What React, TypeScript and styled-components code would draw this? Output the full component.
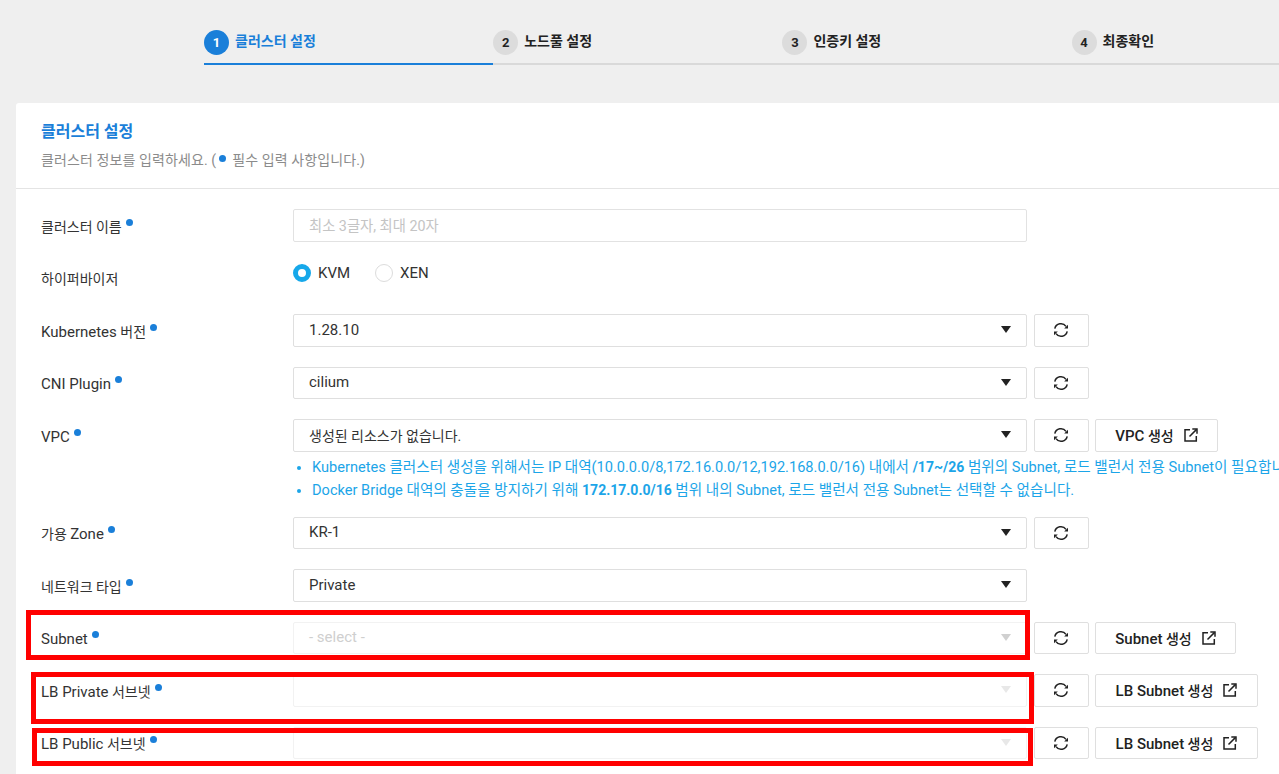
import { ReactNode } from 'react';
import styled, { createGlobalStyle } from 'styled-components';

const GlobalStyle = createGlobalStyle`
  html, body {
    margin: 0;
    padding: 0;
    background: #efefef;
    overflow: hidden;
  }
  * {
    box-sizing: border-box;
  }
  body {
    font-family: Roboto, "Noto Sans CJK KR", sans-serif;
    font-size: 14px;
    color: #222;
  }
`;

const Page = styled.div`
  position: relative;
  width: 1279px;
  height: 774px;
  overflow: hidden;
  background: #efefef;
`;

/* the latin part of a mixed label sits a little larger than the hangul */
const Latin = styled.span`
  font-size: 15px;
`;

const Stepper = styled.ol`
  display: flex;
  list-style: none;
  margin: 0;
  padding: 26px 0 0 204px;
  width: 1500px;
  height: 103px;
`;

const Step = styled.li<{ $active?: boolean }>`
  display: flex;
  align-items: flex-start;
  gap: 6px;
  width: 289.2px;
  height: 39px;
  padding-top: 4px;
  border-bottom: 2px solid ${(p) => (p.$active ? '#1a7fd9' : '#d9d9d9')};
  color: ${(p) => (p.$active ? '#1a7fd9' : '#222')};
  font-weight: 700;
  line-height: 23px;
`;

const StepNumber = styled.span<{ $active?: boolean }>`
  display: flex;
  align-items: center;
  justify-content: center;
  width: 25px;
  height: 25px;
  border-radius: 50%;
  background: ${(p) => (p.$active ? '#1a7fd9' : '#dcdcdc')};
  color: ${(p) => (p.$active ? '#fff' : '#222')};
  font-size: 13px;
  font-weight: 700;
`;

const Card = styled.section`
  margin-left: 16px;
  width: 1400px;
  height: 700px;
  background: #fff;
  border-radius: 3px 0 0 3px;
`;

const CardHeader = styled.header`
  height: 86px;
  padding: 17px 25px 0;
  border-bottom: 1px solid #e4e4e4;
`;

const CardTitle = styled.h2`
  margin: 0;
  font-size: 16px;
  line-height: 23px;
  font-weight: 700;
  color: #1a7fd9;
`;

const CardSub = styled.p`
  margin: 6px 0 0;
  line-height: 22px;
  letter-spacing: 0.1px;
  color: #8b8b8b;
`;

const InlineDot = styled.span`
  display: inline-block;
  width: 7px;
  height: 7px;
  margin: 0 6px 6px 3px;
  border-radius: 50%;
  background: #1a7fd9;
  vertical-align: middle;
`;

const Form = styled.div`
  padding: 20px 25px 0;
`;

const Row = styled.div`
  display: flex;
  align-items: flex-start;
  min-height: 32.5px;
  margin-bottom: 20px;
`;

const LabelCell = styled.div`
  display: flex;
  align-items: flex-start;
  flex: 0 0 252px;
  padding-top: 6.5px;
  line-height: 23px;
  color: #333;
`;

const RequiredDot = styled.span`
  width: 7px;
  height: 7px;
  margin: 3px 0 0 4px;
  border-radius: 50%;
  background: #1a7fd9;
`;

const Controls = styled.div`
  display: flex;
  gap: 6.5px;
`;

const TextInput = styled.div`
  display: flex;
  align-items: center;
  width: 734px;
  height: 32.5px;
  padding: 0 15px 2px;
  border: 1px solid #e2e2e2;
  border-radius: 2px;
  color: #c4c4c4;
  font-size: 14.3px;
`;

const SelectBox = styled.div<{ $disabled?: boolean }>`
  display: flex;
  align-items: center;
  justify-content: space-between;
  width: 734px;
  height: 32.5px;
  padding: 0 15px 1px;
  border: 1px solid ${(p) => (p.$disabled ? '#f2f2f2' : '#dfdfdf')};
  border-radius: 2px;
  color: ${(p) => (p.$disabled ? '#cfcfcf' : '#333')};
`;

const Caret = styled.span<{ $disabled?: boolean; $faint?: boolean }>`
  width: 0;
  height: 0;
  border-left: 5.5px solid transparent;
  border-right: 5.5px solid transparent;
  border-top: 7px solid ${(p) => (p.$faint ? '#e8e8e8' : p.$disabled ? '#d0d0d0' : '#222')};
`;

const Button = styled.button<{ $width: number }>`
  display: flex;
  align-items: center;
  justify-content: center;
  gap: 10px;
  width: ${(p) => p.$width}px;
  height: 32.5px;
  padding: 0;
  background: #fff;
  border: 1px solid #dfdfdf;
  border-radius: 2px;
  color: #222;
  font-family: inherit;
  font-size: 14px;
  font-weight: 500;
`;

const Radios = styled.div`
  display: flex;
  gap: 25px;
`;

const RadioItem = styled.label`
  display: flex;
  align-items: center;
  gap: 7px;
  height: 22px;
  color: #333;
  font-size: 15px;
`;

const RadioMark = styled.span<{ $checked?: boolean }>`
  width: 18px;
  height: 18px;
  border-radius: 50%;
  background: #fff;
  border: ${(p) => (p.$checked ? '5.5px solid #16a8ea' : '1px solid #dcdcdc')};
`;

const HelpList = styled.ul`
  margin: -15.5px 0 0 252px;
  padding: 0 0 0 19px;
  height: 60.5px;
  white-space: nowrap;
  color: #1ca5e8;
  font-size: 14.6px;
  line-height: 23px;
  list-style: disc;

  b {
    font-size: 14px;
  }

  li::marker {
    font-size: 13px;
  }
`;

const Annotation = styled.div<{ $x: number; $y: number; $w: number; $h: number }>`
  position: absolute;
  left: ${(p) => p.$x}px;
  top: ${(p) => p.$y}px;
  width: ${(p) => p.$w}px;
  height: ${(p) => p.$h}px;
  border: 5px solid #ff0000;
  pointer-events: none;
`;

const SyncIcon = () => (
  <svg width="16" height="16" viewBox="0 0 16 16" fill="none">
    <path d="M1.8 6.6A6.2 6.2 0 0 1 13 4.4" stroke="#222" strokeWidth="1.5" />
    <path d="M14.2 9.4A6.2 6.2 0 0 1 3 11.6" stroke="#222" strokeWidth="1.5" />
    <path d="M15 2.8v3.8h-3.8z" fill="#222" />
    <path d="M1 13.2V9.4h3.8z" fill="#222" />
  </svg>
);

const LinkIcon = () => (
  <svg width="14" height="14" viewBox="0 0 14 14" fill="none" stroke="#222" strokeWidth="1.5">
    <path d="M6 1.7H1v11.3h11.3V8" />
    <path d="M5.5 8.5L12.6 1.4" />
    <path d="M8.3 1h4.7v4.7" />
  </svg>
);

const Refresh = () => (
  <Button $width={55}>
    <SyncIcon />
  </Button>
);

const Create = ({ width, children }: { width: number; children: ReactNode }) => (
  <Button $width={width}>
    <span>{children}</span>
    <LinkIcon />
  </Button>
);

const Field = ({ label, children }: { label: ReactNode; children: ReactNode }) => (
  <Row>
    <LabelCell>
      <span>{label}</span>
      <RequiredDot />
    </LabelCell>
    <Controls>{children}</Controls>
  </Row>
);

const Select = ({ children }: { children: ReactNode }) => (
  <SelectBox>
    <span>{children}</span>
    <Caret />
  </SelectBox>
);

const App = () => (
  <Page>
    <GlobalStyle />
    <Stepper>
      <Step $active>
        <StepNumber $active>1</StepNumber>
        클러스터 설정
      </Step>
      <Step>
        <StepNumber>2</StepNumber>
        노드풀 설정
      </Step>
      <Step>
        <StepNumber>3</StepNumber>
        인증키 설정
      </Step>
      <Step>
        <StepNumber>4</StepNumber>
        최종확인
      </Step>
    </Stepper>
    <Card>
      <CardHeader>
        <CardTitle>클러스터 설정</CardTitle>
        <CardSub>
          클러스터 정보를 입력하세요. (<InlineDot />
          필수 입력 사항입니다.)
        </CardSub>
      </CardHeader>
      <Form>
        <Field label="클러스터 이름">
          <TextInput>최소 3글자, 최대 20자</TextInput>
        </Field>
        <Row>
          <LabelCell>하이퍼바이저</LabelCell>
          <Radios>
            <RadioItem>
              <RadioMark $checked />
              KVM
            </RadioItem>
            <RadioItem>
              <RadioMark />
              XEN
            </RadioItem>
          </Radios>
        </Row>
        <Field
          label={
            <>
              <Latin>Kubernetes</Latin> 버전
            </>
          }
        >
          <Select>
            <Latin>1.28.10</Latin>
          </Select>
          <Refresh />
        </Field>
        <Field label={<Latin>CNI Plugin</Latin>}>
          <Select>
            <Latin>cilium</Latin>
          </Select>
          <Refresh />
        </Field>
        <Field label={<Latin>VPC</Latin>}>
          <Select>생성된 리소스가 없습니다.</Select>
          <Refresh />
          <Create width={123}>
            <Latin>VPC</Latin> 생성
          </Create>
        </Field>
        <HelpList>
          <li>
            Kubernetes 클러스터 생성을 위해서는 IP 대역(10.0.0.0/8,172.16.0.0/12,192.168.0.0/16) 내에서{' '}
            <b>/17~/26</b> 범위의 Subnet, 로드 밸런서 전용 Subnet이 필요합니다.
          </li>
          <li>
            Docker Bridge 대역의 충돌을 방지하기 위해 <b>172.17.0.0/16</b> 범위 내의 Subnet, 로드 밸런서 전용 Subnet는
            선택할 수 없습니다.
          </li>
        </HelpList>
        <Field
          label={
            <>
              가용 <Latin>Zone</Latin>
            </>
          }
        >
          <Select>
            <Latin>KR-1</Latin>
          </Select>
          <Refresh />
        </Field>
        <Field label="네트워크 타입">
          <Select>
            <Latin>Private</Latin>
          </Select>
        </Field>
        <Field label={<Latin>Subnet</Latin>}>
          <SelectBox $disabled>
            <Latin>- select -</Latin>
            <Caret $disabled />
          </SelectBox>
          <Refresh />
          <Create width={141}>
            <Latin>Subnet</Latin> 생성
          </Create>
        </Field>
        <Field
          label={
            <>
              <Latin>LB Private</Latin> 서브넷
            </>
          }
        >
          <SelectBox $disabled>
            <span />
            <Caret $faint />
          </SelectBox>
          <Refresh />
          <Create width={163}>
            <Latin>LB Subnet</Latin> 생성
          </Create>
        </Field>
        <Field
          label={
            <>
              <Latin>LB Public</Latin> 서브넷
            </>
          }
        >
          <SelectBox $disabled>
            <span />
            <Caret $faint />
          </SelectBox>
          <Refresh />
          <Create width={163}>
            <Latin>LB Subnet</Latin> 생성
          </Create>
        </Field>
      </Form>
    </Card>
    <Annotation $x={26} $y={610} $w={1004} $h={50} />
    <Annotation $x={31} $y={672} $w={1003} $h={52} />
    <Annotation $x={32} $y={728} $w={1001} $h={38} />
  </Page>
);

export default App;
